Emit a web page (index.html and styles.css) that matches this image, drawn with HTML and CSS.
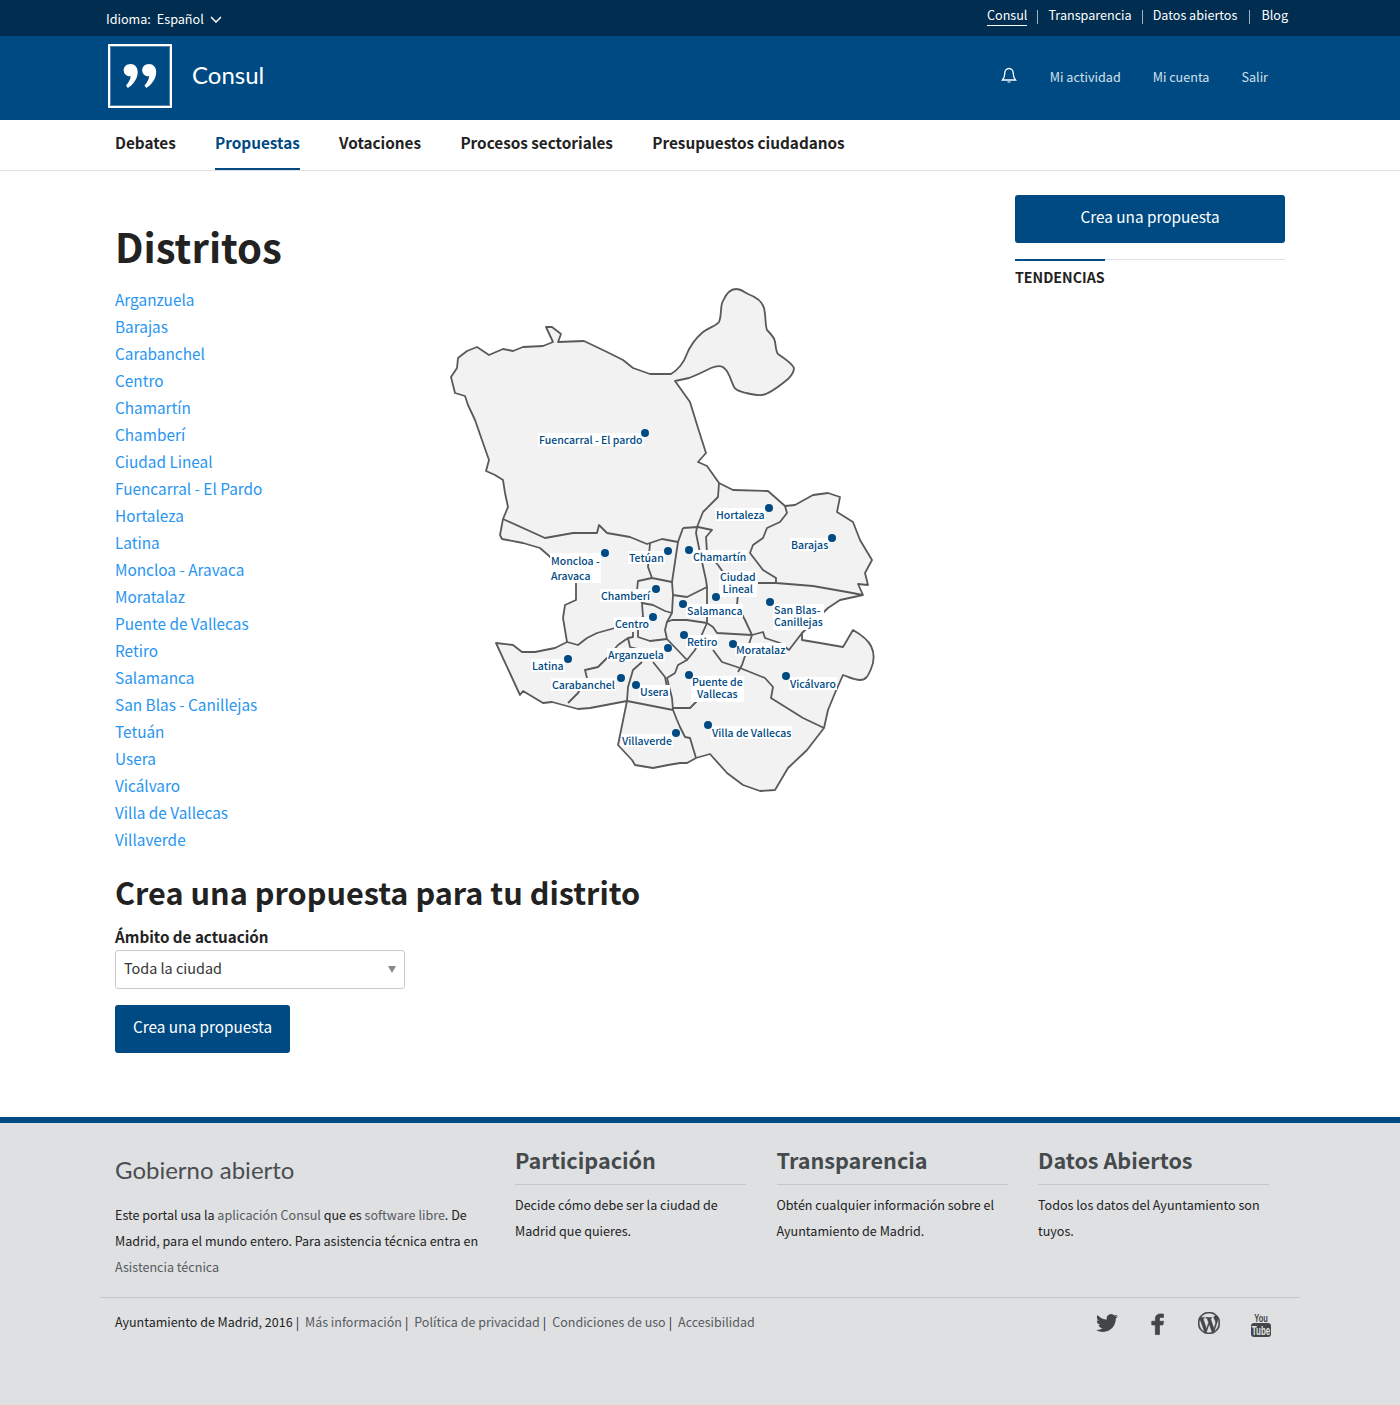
FILE: index.html
```html
<!DOCTYPE html>
<html lang="es">
	<head>
		<meta charset="utf-8">
		<title>Distritos</title>
		<link rel="stylesheet" href="styles.css">
	</head>
	<body>
		<!--barra superior-->
		<div class="topbar">
			<div class="lang">
				<span>Idioma:</span>
				<span class="lang-value">Español</span>
				<svg class="chevron" width="12" height="7" viewBox="0 0 12 7"><path d="M1 1l5 5 5-5" fill="none" stroke="#fff" stroke-width="1.5"/></svg>
			</div>
			<ul class="toplinks">
				<li><a href="#" class="current">Consul</a></li>
				<li><a href="#">Transparencia</a></li>
				<li><a href="#">Datos abiertos</a></li>
				<li><a href="#">Blog</a></li>
			</ul>
		</div>

		<!--cabecera-->
		<header class="header">
			<a href="#" class="logo">
				<span class="logo-box">
					<svg width="34" height="26" viewBox="0 0 34 26"><path d="M7.5 1C3.4 1 .7 3.800.7 7.300c0 3.500 2.700 6 5.800 6 .5 0 1-.1 1.300-.2-.4 3.200-2.100 6.500-4.800 9.400l1.800 2.500C10.500 21.400 14.700 15.400 14.700 9c0-5-3-8-7.200-8z" fill="#fff"/><path d="M26 1c-4.100 0-6.800 2.800-6.800 6.300 0 3.500 2.700 6 5.800 6 .5 0 1-.1 1.300-.2-.4 3.200-2.100 6.500-4.800 9.400l1.800 2.500C29 21.400 33.200 15.400 33.200 9c0-5-3-8-7.200-8z" fill="#fff"/></svg>
				</span>
				<span class="logo-text">Consul</span>
			</a>
			<div class="usernav">
				<svg class="bell" width="16" height="17" viewBox="0 0 16 17"><path d="M8 1.500c-2.700 0-4.200 2-4.200 4.500 0 3-.6 5-2.300 7h13c-1.700-2-2.300-4-2.300-7 0-2.500-1.500-4.500-4.200-4.500z" fill="none" stroke="#fff" stroke-width="1.300"/><path d="M6.500 14.500h3v1h-3z" fill="#fff"/></svg>
				<a href="#">Mi actividad</a>
				<a href="#">Mi cuenta</a>
				<a href="#">Salir</a>
			</div>
		</header>

		<!--menu principal-->
		<nav class="mainnav">
			<a href="#">Debates</a>
			<a href="#" class="active">Propuestas</a>
			<a href="#">Votaciones</a>
			<a href="#">Procesos sectoriales</a>
			<a href="#">Presupuestos ciudadanos</a>
		</nav>

		<div class="page">
			<main class="content">
				<h1 class="title">Distritos</h1>
				<div class="districts">
					<ul class="district-list">
						<li><a href="#">Arganzuela</a></li>
						<li><a href="#">Barajas</a></li>
						<li><a href="#">Carabanchel</a></li>
						<li><a href="#">Centro</a></li>
						<li><a href="#">Chamartín</a></li>
						<li><a href="#">Chamberí</a></li>
						<li><a href="#">Ciudad Lineal</a></li>
						<li><a href="#">Fuencarral - El Pardo</a></li>
						<li><a href="#">Hortaleza</a></li>
						<li><a href="#">Latina</a></li>
						<li><a href="#">Moncloa - Aravaca</a></li>
						<li><a href="#">Moratalaz</a></li>
						<li><a href="#">Puente de Vallecas</a></li>
						<li><a href="#">Retiro</a></li>
						<li><a href="#">Salamanca</a></li>
						<li><a href="#">San Blas - Canillejas</a></li>
						<li><a href="#">Tetuán</a></li>
						<li><a href="#">Usera</a></li>
						<li><a href="#">Vicálvaro</a></li>
						<li><a href="#">Villa de Vallecas</a></li>
						<li><a href="#">Villaverde</a></li>
					</ul>

					<!--mapa: el viewBox usa coordenadas de pagina-->
					<div class="map">
						<svg class="map-svg" width="440" height="520" viewBox="440 280 440 520">
							<path class="area" d="M503 519L508 507 505 493 503 480 495 475 486 471 489 460 483 443 475 420 468 405 465 396 455 393 451 377 457 368 458 358 467 351 477 347 489 355 503 349 513 351 523 347 543 346 553 342 546 327 552 327 561 334 558 342 584 341 607 352 623 360 633 368 650 374 671 374C678 370 684 362 686 356C691 343 697 337 703 332C710 327 716 326 719 322C722 315 720 305 723 301C726 294 731 289 736 289C741 289 744 292 748 294C756 297 762 301 764 308C766 316 765 325 767 330C771 334 775 338 775 342C776 347 776 352 778 354C784 358 792 363 794 368C794 372 791 376 788 379C782 384 770 394 762 395C757 396 751 394 746 393C740 391 736 391 734 387C731 381 729 372 725 369C722 365 716 366 711 368C705 371 697 375 689 378L675 381 690 402 698 428 706 453 698 462 707 466 719 483 733 490 768 491 785 506 795 505 813 495 828 493 840 497 837 512 853 522 860 540 872 560 865 573 868 585 858 584 863 595 840 600 828 608 802 633 802 640 820 643 843 647 853 630C860 634 868 640 871 646C875 654 874 662 871 669C868 676 866 680 860 680C854 680 849 677 843 675L835 693 828 710 824 728 807 750 788 768 775 790 760 791 743 785 727 773 710 754 696 758 687 763 680 763 668 765 653 768 635 765 632 760 618 745 627 701 590 708 578 709 552 702 543 703 533 697 523 691 520 695 496 643 513 645 522 652 535 652 555 648 567 642 563 618 565 605 576 600 576 581 548 555 540 548 523 543 502 539 500 535z"/>
							<path class="line" d="M503 519L545 538 573 533 597 533 599 525 607 533 630 537 647 544 650 543 662 539 678 542"/>
							<path class="line" d="M719 483L718 497 703 512 697 527 696 533 700 553 706 580 707 587 707 623 713 627 717 633 752 635 763 632 765 638 780 643 789 650 802 633"/>
							<path class="line" d="M683 528L698 527 712 530 706 537 707 553 718 565 725 575 738 593 737 605 745 620 752 635"/>
							<path class="line" d="M683 528L678 542 672 582 673 595 672 613 667 622 665 630 667 639 687 660 678 665 675 673 667 678 672 698 673 710 677 720 680 727 685 737 690 738 696 758"/>
							<path class="line" d="M650 543L648 567 652 578 672 582M652 578L638 581 637 590 642 603 643 617 615 628 597 633 587 638 578 645 567 642"/>
							<path class="line" d="M642 603L653 605 665 611 672 613M673 595L687 597 707 587M667 622L672 620 687 620 707 623M667 639L650 641 638 637 638 628"/>
							<path class="line" d="M633 632L633 637 628 638 618 645 607 658 598 667 585 670 587 678 578 693 568 703M628 638L630 647 638 649"/>
							<path class="line" d="M642 662L633 670 628 687 627 701 673 710M653 662L665 677 668 692"/>
							<path class="line" d="M707 623L695 650 687 660M713 650L722 662 740 668 765 678 773 687 771 698 803 718 824 728M752 635L742 665 738 672"/>
							<path class="line" d="M673 708L690 708 700 698"/>
							<path class="line" d="M785 506L787 513 780 522 767 528 763 538 753 545 750 553 763 570 776 578 776 583 813 586 847 592 863 595M776 583L758 583"/>
						</svg>
						<span class="pin" style="left:99px;top:154px">Fuencarral - El pardo</span>
						<span class="pin" style="left:276px;top:229px">Hortaleza</span>
						<span class="pin" style="left:351px;top:259px">Barajas</span>
						<span class="pin tall" style="left:111px;top:275px">Moncloa -<br>Aravaca</span>
						<span class="pin" style="left:189px;top:272px">Tetúan</span>
						<span class="pin" style="left:253px;top:271px">Chamartín</span>
						<span class="pin two center" style="left:280px;top:291px">Ciudad<br>Lineal</span>
						<span class="pin" style="left:161px;top:310px">Chamberí</span>
						<span class="pin" style="left:247px;top:325px">Salamanca</span>
						<span class="pin two" style="left:334px;top:324px">San Blas-<br>Canillejas</span>
						<span class="pin" style="left:175px;top:338px">Centro</span>
						<span class="pin" style="left:247px;top:356px">Retiro</span>
						<span class="pin" style="left:296px;top:364px">Moratalaz</span>
						<span class="pin" style="left:168px;top:369px">Arganzuela</span>
						<span class="pin" style="left:92px;top:380px">Latina</span>
						<span class="pin two center" style="left:252px;top:396px">Puente de<br>Vallecas</span>
						<span class="pin" style="left:112px;top:399px">Carabanchel</span>
						<span class="pin" style="left:350px;top:398px">Vicálvaro</span>
						<span class="pin" style="left:200px;top:406px">Usera</span>
						<span class="pin" style="left:272px;top:447px">Villa de Vallecas</span>
						<span class="pin" style="left:182px;top:455px">Villaverde</span>
						<svg class="map-dots" width="440" height="520" viewBox="440 280 440 520">
							<circle cx="645" cy="433" r="4"/>
							<circle cx="769" cy="508" r="4"/>
							<circle cx="832" cy="538" r="4"/>
							<circle cx="605" cy="553" r="4"/>
							<circle cx="668" cy="551" r="4"/>
							<circle cx="689" cy="550" r="4"/>
							<circle cx="656" cy="589" r="4"/>
							<circle cx="716" cy="597" r="4"/>
							<circle cx="770" cy="602" r="4"/>
							<circle cx="683" cy="604" r="4"/>
							<circle cx="653" cy="617" r="4"/>
							<circle cx="684" cy="635" r="4"/>
							<circle cx="733" cy="644" r="4"/>
							<circle cx="668" cy="648" r="4"/>
							<circle cx="568" cy="659" r="4"/>
							<circle cx="689" cy="675" r="4"/>
							<circle cx="621" cy="678" r="4"/>
							<circle cx="786" cy="676" r="4"/>
							<circle cx="636" cy="685" r="4"/>
							<circle cx="708" cy="725" r="4"/>
							<circle cx="676" cy="733" r="4"/>
						</svg>
					</div>
				</div>

				<h2 class="subtitle">Crea una propuesta para tu distrito</h2>
				<form class="geo-form">
					<label class="field-label">Ámbito de actuación</label>
					<div class="select">
						<span>Toda la ciudad</span>
						<i class="select-arrow"></i>
					</div>
					<a href="#" class="button">Crea una propuesta</a>
				</form>
			</main>

			<aside class="sidebar">
				<a href="#" class="button button-wide">Crea una propuesta</a>
				<div class="side-title"><span>TENDENCIAS</span></div>
			</aside>
		</div>

		<footer class="footer">
			<div class="footer-top">
				<div class="footer-about">
					<h3>Gobierno abierto</h3>
					<p>Este portal usa la <a href="#">aplicación Consul</a> que es <a href="#">software libre</a>. De Madrid, para el mundo entero. Para asistencia técnica entra en <a href="#">Asistencia técnica</a></p>
				</div>
				<div class="footer-col">
					<h4>Participación</h4>
					<p>Decide cómo debe ser la ciudad de Madrid que quieres.</p>
				</div>
				<div class="footer-col">
					<h4>Transparencia</h4>
					<p>Obtén cualquier información sobre el Ayuntamiento de Madrid.</p>
				</div>
				<div class="footer-col">
					<h4>Datos Abiertos</h4>
					<p>Todos los datos del Ayuntamiento son tuyos.</p>
				</div>
			</div>
			<div class="footer-bottom">
				<p class="legal">Ayuntamiento de Madrid, 2016<b>|</b><a href="#">Más información</a><b>|</b><a href="#">Política de privacidad</a><b>|</b><a href="#">Condiciones de uso</a><b>|</b><a href="#">Accesibilidad</a></p>
				<div class="social">
					<svg class="tw" width="22" height="22" viewBox="0 0 24 24"><path d="M23.953 4.570a10 10 0 01-2.825.775 4.958 4.958 0 002.163-2.723c-.951.555-2.005.959-3.127 1.184a4.920 4.920 0 00-8.384 4.482C7.690 8.095 4.067 6.130 1.640 3.162a4.822 4.822 0 00-.666 2.475c0 1.710.870 3.213 2.188 4.096a4.904 4.904 0 01-2.228-.616v.060a4.923 4.923 0 003.946 4.827 4.996 4.996 0 01-2.212.085 4.936 4.936 0 004.604 3.417 9.867 9.867 0 01-6.102 2.105c-.390 0-.779-.023-1.170-.067a13.995 13.995 0 007.557 2.209c9.053 0 13.998-7.496 13.998-13.985 0-.210 0-.420-.015-.630A9.935 9.935 0 0024 4.590z"/></svg>
					<svg class="fb" width="22" height="24" viewBox="0 0 24 24"><path d="M14.700 23.500V13h3.800l.6-4h-4.400V6.700c0-1.200.4-1.900 2-1.900h2.400V1.200c-.5-.1-1.900-.2-3.300-.2-3.400 0-5.600 1.800-5.600 5.200V9H6.300v4h3.900v10.500z"/></svg>
					<svg class="wp" width="22" height="22" viewBox="0 0 24 24"><path d="M21.469 6.825c.840 1.537 1.318 3.300 1.318 5.175 0 3.979-2.156 7.456-5.363 9.325l3.295-9.527c.615-1.540.820-2.771.820-3.864 0-.405-.026-.780-.070-1.110m-7.981.105c.647-.030 1.232-.105 1.232-.105.582-.075.514-.930-.067-.899 0 0-1.755.135-2.880.135-1.064 0-2.850-.150-2.850-.150-.585-.030-.661.855-.075.885 0 0 .540.061 1.125.090l1.680 4.605-2.370 7.080L5.354 6.900c.649-.030 1.234-.100 1.234-.100.585-.075.516-.930-.065-.896 0 0-1.746.138-2.874.138-.200 0-.438-.008-.690-.015C4.911 3.150 8.235 1.215 12 1.215c2.809 0 5.365 1.072 7.286 2.833-.046-.003-.091-.009-.141-.009-1.060 0-1.812.923-1.812 1.914 0 .890.513 1.643 1.060 2.531.411.720.890 1.643.890 2.977 0 .915-.354 1.994-.821 3.479l-1.075 3.585-3.900-11.610.001.014zM12 22.784c-1.059 0-2.081-.153-3.048-.437l3.237-9.406 3.315 9.087c.024.053.050.101.078.149-1.120.393-2.325.609-3.582.609M1.211 12c0-1.564.336-3.050.935-4.390L7.290 21.709C3.694 19.960 1.212 16.271 1.211 12M12 0C5.385 0 0 5.385 0 12s5.385 12 12 12 12-5.385 12-12S18.615 0 12 0"/></svg>
					<svg class="yt-icon" width="22" height="26" viewBox="0 0 22 26"><rect x="1" y="11" width="20" height="14" rx="3"/><text class="yt yt-you" transform="translate(11 9.500) scale(1 1.500)">You</text><text class="yt yt-tube" transform="translate(11 22.500) scale(1 1.600)">Tube</text></svg>
				</div>
			</div>
		</footer>
	</body>
</html>
```
FILE: styles.css
```css
* {
	margin: 0;
	padding: 0;
	box-sizing: border-box;
}

ul {
	list-style: none;
}

a {
	color: inherit;
	text-decoration: none;
}

body {
	font-family: "Noto Sans CJK SC", "Open Sans", sans-serif;
	font-size: 14px;
	color: #222222;
	background-color: #FFFFFF;
}

.topbar {
	height: 36px;
	padding: 0 112px 0 106px;
	display: flex;
	justify-content: space-between;
	background-color: #002D50;
	color: #FFFFFF;
	font-size: 12.600px;
}

.lang {
	display: flex;
	align-items: center;
}

.lang-value {
	margin-left: 6px;
}

.chevron {
	margin-left: 6px;
	margin-top: 2px;
}

.toplinks {
	display: flex;
	padding-top: 5px;
}

.toplinks li {
	height: 20px;
	line-height: 20px;
}

.toplinks li + li {
	margin-left: 10px;
	padding-left: 11px;
	background: linear-gradient(#9FB2C1, #9FB2C1) left 5px / 1px 14px no-repeat;
}

.toplinks li:last-child {
	padding-left: 12px;
	margin-left: 12px;
}

.toplinks .current {
	display: block;
	border-bottom: 1px solid #FFFFFF;
}

.header {
	height: 84px;
	padding: 8px 132px 0 108px;
	display: flex;
	justify-content: space-between;
	background-color: #004A83;
}

.logo {
	display: flex;
	align-items: flex-start;
	color: #FFFFFF;
}

.logo-box {
	width: 64px;
	height: 64px;
	display: flex;
	align-items: center;
	justify-content: center;
	border: 2px solid #FFFFFF;
	box-shadow: inset 0 0 0 1px #4F7FA6;
}

.logo-text {
	margin-left: 20px;
	font-family: "Lato", sans-serif;
	font-size: 24px;
	font-weight: 400;
	line-height: 62px;
}

.usernav {
	display: flex;
	align-items: center;
	height: 64px;
	color: #D5E0EA;
	font-size: 12.600px;
}

.usernav a {
	margin-left: 32px;
}

.bell {
	margin-top: -1px;
	margin-right: 1px;
}

.mainnav {
	height: 51px;
	padding: 0 115px;
	display: flex;
	gap: 39.300px;
	border-bottom: 1px solid #DEE0E3;
}

.mainnav a {
	height: 50px;
	line-height: 44px;
	font-size: 15.300px;
	font-weight: 700;
	color: #222222;
}

.mainnav .active {
	color: #004A83;
	border-bottom: 2px solid #004A83;
}

.page {
	display: flex;
	justify-content: space-between;
	padding: 0 115px;
}

.content {
	width: 765px;
	padding-top: 47px;
}

.title {
	height: 56px;
	font-size: 40px;
	line-height: 56px;
	font-weight: 700;
	color: #222222;
}

.districts {
	display: flex;
	height: 596px;
}

.district-list {
	width: 325px;
	padding-top: 12px;
}

.district-list li {
	height: 27px;
	line-height: 27px;
	font-size: 15.350px;
	color: #2895F1;
}

.map {
	width: 440px;
	height: 520px;
	flex: none;
	position: relative;
	margin-top: 6px;
}

.map-svg {
	display: block;
}

.map-dots {
	position: absolute;
	top: 0;
	left: 0;
	fill: #004A83;
}

.area {
	fill: #F2F2F3;
	stroke: #58595B;
	stroke-width: 1.800;
	stroke-linejoin: round;
}

.line {
	fill: none;
	stroke: #58595B;
	stroke-width: 1.800;
	stroke-linejoin: round;
}

.pin {
	position: absolute;
	margin: -1px 0 0 -1px;
	padding: 0 1px;
	background-color: #FFFFFF;
	color: #004A83;
	font-size: 10.500px;
	font-weight: 500;
	line-height: 13px;
	white-space: nowrap;
}

.pin.two {
	margin-top: 0;
	line-height: 12px;
	padding-bottom: 2px;
}

.pin.tall {
	margin-top: -2px;
	line-height: 15px;
}

.pin.center {
	text-align: center;
}

.subtitle {
	height: 44px;
	font-size: 30.650px;
	line-height: 44px;
	font-weight: 700;
	color: #222222;
}

.geo-form {
	padding-top: 11px;
}

.field-label {
	display: block;
	height: 25px;
	line-height: 23px;
	font-size: 15.200px;
	font-weight: 700;
}

.select {
	width: 290px;
	height: 39px;
	margin-bottom: 16px;
	padding: 0 8px 4px;
	display: flex;
	align-items: center;
	justify-content: space-between;
	border: 1px solid #CACACA;
	border-radius: 3px;
	font-size: 14.400px;
	color: #333333;
}

.select-arrow {
	margin-top: 4px;
	border-top: 7px solid #888888;
	border-left: 4px solid transparent;
	border-right: 4px solid transparent;
}

.button {
	display: inline-block;
	height: 48px;
	padding: 0 18px;
	line-height: 43px;
	border-radius: 3px;
	background-color: #004A83;
	color: #FFFFFF;
	font-size: 15.300px;
	font-weight: 400;
}

.sidebar {
	width: 270px;
	padding-top: 24px;
}

.button-wide {
	display: block;
	text-align: center;
}

.side-title {
	height: 30px;
	margin-top: 16px;
	border-top: 1px solid #DEE0E3;
}

.side-title span {
	display: inline-block;
	margin-top: -1px;
	padding-top: 2px;
	border-top: 2px solid #004A83;
	font-size: 14.200px;
	font-weight: 700;
	line-height: 28px;
	height: 30px;
}

.footer {
	height: 288px;
	margin-top: 64px;
	border-top: 6px solid #004A83;
	background-color: #DEE0E2;
}

.footer-top {
	height: 174px;
	padding: 19px 130px 0 115px;
	display: flex;
}

.footer-about {
	width: 400px;
	padding-right: 30px;
}

.footer-about h3 {
	height: 38px;
	padding-top: 9px;
	font-family: "Lato", sans-serif;
	font-size: 24px;
	font-weight: 400;
	line-height: 38px;
	color: #4A4E52;
	margin-bottom: 22px;
}

.footer-top p {
	font-size: 12.570px;
	line-height: 26px;
}

.footer-about a,
.legal a {
	color: #575B5F;
}

.footer-col {
	width: 231px;
	margin-right: 30.500px;
}

.footer-col:last-child {
	margin-right: 0;
}

.footer-col h4 {
	height: 43px;
	margin-bottom: 7px;
	border-bottom: 1px solid #C5C7C9;
	font-size: 21.600px;
	line-height: 36px;
	font-weight: 700;
	color: #454A4D;
}

.footer-bottom {
	margin: 0 100px;
	padding: 11px 15px 0;
	display: flex;
	justify-content: space-between;
	border-top: 1px solid #C5C7C9;
}

.legal {
	font-size: 12.500px;
	line-height: 26px;
}

.legal b {
	margin: 0 6px 0 3px;
	font-weight: 400;
}

.social {
	display: flex;
	align-items: flex-start;
	gap: 30px;
	padding: 3px 13px 0 0;
	fill: #424649;
}

.tw {
	margin-right: -2px;
}

.fb path {
	stroke: #424649;
	stroke-width: .8;
}

.wp path {
	stroke: #424649;
	stroke-width: .7;
}

.yt {
	text-anchor: middle;
	font-family: "Liberation Sans", sans-serif;
	font-weight: 700;
}

.yt-you {
	font-size: 7.500px;
}

.yt-tube {
	font-size: 8px;
	fill: #DEE0E2;
}
```
